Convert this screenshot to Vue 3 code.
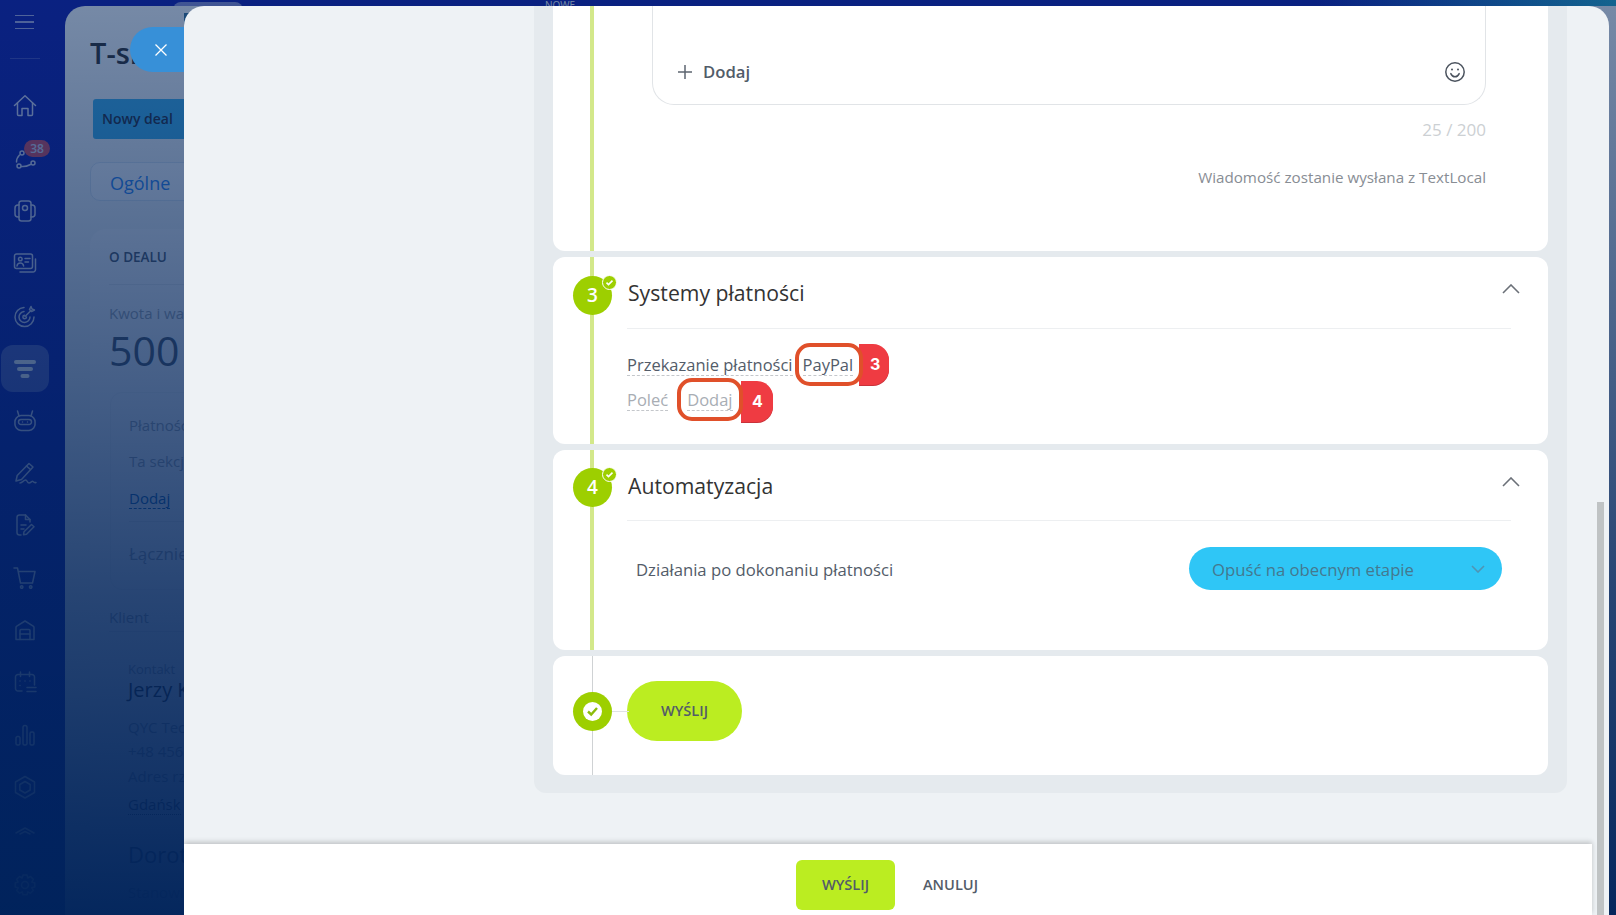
<template>
  <div class="page">
    <!-- Menu boczne -->
    <aside class="sidebar">
      <div class="burger"><span></span><span></span><span></span></div>
      <div class="side-sep"></div>
      <div v-for="item in menu" :key="item.id" class="side-item" :class="'si-' + item.id">
        <div class="side-ico" :class="{ active: item.active }">
          <svg width="24" height="24" viewBox="0 0 24 24" fill="none" stroke="#fff" stroke-width="1.5" stroke-linecap="round" stroke-linejoin="round">
            <path v-for="d in item.paths" :key="d" :d="d" />
          </svg>
          <span v-if="item.badge" class="side-badge">{{ item.badge }}</span>
        </div>
      </div>
    </aside>

    <!-- Karta dealu pod panelem -->
    <main class="deal">
      <h1 class="deal-title">T-shirt</h1>
      <div class="deal-btn">Nowy deal</div>
      <div class="deal-tab">Ogólne</div>
      <section class="deal-card">
        <div class="o-head">O DEALU</div>
        <div class="kwota">Kwota i waluta</div>
        <div class="amount">500 zł</div>
        <div class="inner">
          <div class="pl">Płatność</div>
          <div class="ta">Ta sekcja</div>
          <div class="inner-add"><span>Dodaj</span></div>
          <div class="inner-sep"></div>
          <div class="total">Łącznie</div>
        </div>
        <div class="klient">Klient</div>
        <div class="contact">
          <div class="c-label">Kontakt</div>
          <div class="c-name">Jerzy Kowalski</div>
          <div class="c-line c1">QYC Tech</div>
          <div class="c-line c2">+48 456</div>
          <div class="c-line c3">Adres rz</div>
          <div class="c-line c4"><span>Gdańsk</span></div>
          <div class="c-name2">Dorota</div>
          <div class="c-line c5">Stanowisko</div>
        </div>
      </section>
    </main>
    <div class="behind-pill"></div>
    <div class="behind-label">NOWE</div>

    <div class="shade"></div>
    <div class="corner-bit"></div>

    <button class="close-tab">
      <svg width="14" height="14" viewBox="0 0 14 14" fill="none" stroke="#fff" stroke-width="1.3"><path d="M1.5 1.5l11 11M12.5 1.5l-11 11" /></svg>
    </button>

    <!-- Panel wysuwany -->
    <div class="slider">
      <div class="slider-body">
        <div class="steps">
          <!-- krok 2 -->
          <section class="card card-msg">
            <div class="line"></div>
            <div class="msg-box">
              <div class="msg-add">
                <svg width="16" height="16" viewBox="0 0 16 16" fill="none" stroke="#5d6570" stroke-width="1.5"><path d="M8 1v14M1 8h14" /></svg>
                <span>Dodaj</span>
              </div>
              <svg class="smile" width="22" height="22" viewBox="0 0 22 22" fill="none" stroke="#4b535e" stroke-width="1.5" stroke-linecap="round">
                <circle cx="11" cy="11" r="9.2" />
                <path d="M6.8 12.6c1 2.2 2.4 3.2 4.2 3.2s3.2-1 4.2-3.2" />
                <circle cx="8" cy="8.6" r="1" fill="#4b535e" stroke="none" />
                <circle cx="14" cy="8.6" r="1" fill="#4b535e" stroke="none" />
              </svg>
            </div>
            <div class="msg-count">25 / 200</div>
            <div class="msg-note">Wiadomość zostanie wysłana z TextLocal</div>
          </section>

          <!-- krok 3 -->
          <section class="card card-pay">
            <div class="line"></div>
            <div class="num">3
              <span class="num-check">
                <svg width="9" height="9" viewBox="0 0 9 9" fill="none" stroke="#fff" stroke-width="1.6"><path d="M1.5 4.6l2 2 4-4" /></svg>
              </span>
            </div>
            <div class="head">
              <h2>Systemy płatności</h2>
              <svg class="chev" width="18" height="10" viewBox="0 0 18 10" fill="none" stroke="#6b7078" stroke-width="1.6"><path d="M1 9l8-8 8 8" /></svg>
            </div>
            <div class="pay-rows">
              <div class="pay-row">
                <span class="dash">Przekazanie płatności</span>
                <span class="dash val">PayPal
                  <i class="mark-num">3</i>
                  <i class="mark-ring"></i>
                </span>
              </div>
              <div class="pay-row muted">
                <span class="dash">Poleć</span>
                <span class="dash val val-add">Dodaj
                  <i class="mark-num">4</i>
                  <i class="mark-ring"></i>
                </span>
              </div>
            </div>
          </section>

          <!-- krok 4 -->
          <section class="card card-auto">
            <div class="line"></div>
            <div class="num">4
              <span class="num-check">
                <svg width="9" height="9" viewBox="0 0 9 9" fill="none" stroke="#fff" stroke-width="1.6"><path d="M1.5 4.6l2 2 4-4" /></svg>
              </span>
            </div>
            <div class="head">
              <h2>Automatyzacja</h2>
              <svg class="chev" width="18" height="10" viewBox="0 0 18 10" fill="none" stroke="#6b7078" stroke-width="1.6"><path d="M1 9l8-8 8 8" /></svg>
            </div>
            <div class="auto-row">
              <span>Działania po dokonaniu płatności</span>
              <div class="select">
                <span>Opuść na obecnym etapie</span>
                <svg width="14" height="8" viewBox="0 0 14 8" fill="none" stroke="#4f94b4" stroke-width="1.6"><path d="M1 1l6 6 6-6" /></svg>
              </div>
            </div>
          </section>

          <!-- wyślij -->
          <section class="card card-send">
            <div class="line line-thin"></div>
            <div class="num num-send">
              <span class="send-check">
                <svg width="13" height="11" viewBox="0 0 13 11" fill="none" stroke="#8cbc0a" stroke-width="2.4"><path d="M2 5.5l3.2 3L11 2" /></svg>
              </span>
            </div>
            <div class="send-link"></div>
            <button class="send-btn">WYŚLIJ</button>
          </section>
        </div>
      </div>

      <footer class="footer">
        <button class="foot-send">WYŚLIJ</button>
        <button class="foot-cancel">ANULUJ</button>
      </footer>
      <div class="scrollbar"></div>
    </div>
  </div>
</template>

<script setup>
const menu = [
  { id: "home", paths: ["M1.5 11.5L12 1.8l10.5 9.7", "M4.5 9v11.5a1 1 0 0 0 1 1H9v-7h6v7h3.5a1 1 0 0 0 1-1V9"] },
  {
    id: "flow",
    badge: 38,
    paths: [
      "M4 19a2 2 0 1 0 4 0a2 2 0 1 0-4 0",
      "M18 16a2 2 0 1 0 4 0a2 2 0 1 0-4 0",
      "M7 6a2 2 0 1 0 4 0a2 2 0 1 0-4 0",
      "M3.500 15c0-3 1-5 3-7",
      "M8.500 19.500c3 .5 6-.5 9-2",
    ],
  },
  {
    id: "phone",
    paths: [
      "M8.500 2h7a2.500 2.500 0 0 1 2.500 2.500v15a2.500 2.500 0 0 1-2.500 2.500h-7A2.500 2.500 0 0 1 6 19.500v-15A2.500 2.500 0 0 1 8.500 2z",
      "M6 6H5a3 3 0 0 0-3 3v6a3 3 0 0 0 3 3h1",
      "M18 6h1a3 3 0 0 1 3 3v6a3 3 0 0 1-3 3h-1",
      "M9.500 9a2.500 2.500 0 1 0 5 0a2.500 2.500 0 1 0-5 0",
    ],
  },
  {
    id: "idcard",
    paths: [
      "M3.500 3h14a2 2 0 0 1 2 2v10.500a2 2 0 0 1-2 2h-14a2 2 0 0 1-2-2V5a2 2 0 0 1 2-2z",
      "M5.500 8a1.800 1.800 0 1 0 3.600 0a1.800 1.800 0 1 0-3.600 0",
      "M4 15c.3-2 1.600-3 3.300-3s3 1 3.300 3",
      "M12 7.500h5",
      "M12 11h3.500",
      "M22.500 8v10.500a2.500 2.500 0 0 1-2.500 2.500H7",
    ],
  },
  {
    id: "target",
    paths: [
      "M21 13a9.500 9.500 0 1 1-10-9.500",
      "M17 13a5.500 5.500 0 1 1-6-5.500",
      "M13.500 13a1.800 1.800 0 1 1-2-1.800",
      "M12 12.500l6-6",
      "M16.500 5.500L18 2.500l1 2.500 2.500 1-3 1.500z",
    ],
  },
  {
    id: "funnel",
    active: true,
    paths: ["M3 6h18", "M6 13h12", "M9.500 20h5"],
  },
  {
    id: "robot",
    paths: [
      "M8 6.500h8a6.500 6.500 0 0 1 6 7.500 6.500 6.500 0 0 1-6 7.500H8a6.500 6.500 0 0 1-6-7.500 6.500 6.500 0 0 1 6-7.500z",
      "M6 7L4.500 2",
      "M18 7l1.500-5",
      "M8 10.500h8a2.500 2.500 0 0 1 0 5H8a2.500 2.500 0 0 1 0-5z",
      "M9.500 13h.01",
      "M14.500 13h.01",
    ],
  },
  {
    id: "pen",
    paths: [
      "M16 2.500l4 3.500L8.500 18.500 3 20l1.200-5.500z",
      "M13.500 5l4 3.500",
      "M7 22c2.500 0 3.500-3 5.500-3s1.500 3 3.500 3 3-2.500 4-1.500 1.500 1.500 3 1",
    ],
  },
  {
    id: "doc",
    paths: [
      "M17 9V6.500L12.500 2H6.500A2.500 2.500 0 0 0 4 4.500v15A2.500 2.500 0 0 0 6.500 22H8",
      "M12.500 2v4.500H17",
      "M8 12h5",
      "M8 16h3",
      "M18.500 11.500l2.500 2.200-7.500 7.500-3 .5.5-3z",
    ],
  },
  {
    id: "cart",
    paths: [
      "M1 2h3.500l3 15h12l2.500-11.500H5.500",
      "M7.500 21a1.200 1.200 0 1 0 2.400 0a1.200 1.200 0 1 0-2.400 0",
      "M16.500 21a1.200 1.200 0 1 0 2.400 0a1.200 1.200 0 1 0-2.400 0",
    ],
  },
  {
    id: "garage",
    paths: [
      "M3 21.500V9.500c0-.6.300-1.100.8-1.400L12 3l8.200 5.100c.5.3.8.8.8 1.400v12z",
      "M7 21.500V12.500a1 1 0 0 1 1-1h8a1 1 0 0 1 1 1v9",
      "M7 16h10",
    ],
  },
  {
    id: "calendar",
    paths: [
      "M9 21H5a2.500 2.500 0 0 1-2.500-2.500V7A2.500 2.500 0 0 1 5 4.500h14A2.500 2.500 0 0 1 21.500 7v8",
      "M7.500 2v4.500",
      "M16.500 2v4.500",
      "M7 11h.01",
      "M12 11h.01",
      "M17 11h.01",
      "M7 15.500h.01",
      "M14 17.500h9",
      "M14 21.500h9",
    ],
  },
  {
    id: "bars",
    paths: [
      "M4.500 13.500h1a1.500 1.500 0 0 1 1.500 1.500v5.500a1.500 1.500 0 0 1-1.500 1.500h-1A1.500 1.500 0 0 1 3 20.500V15a1.500 1.500 0 0 1 1.500-1.500z",
      "M12 2.500a2 2 0 0 1 2 2v16a1.500 1.500 0 0 1-1.500 1.500h-1a1.500 1.500 0 0 1-1.500-1.500v-16a2 2 0 0 1 2-2z",
      "M18.500 9h1a1.500 1.500 0 0 1 1.500 1.500v10a1.500 1.500 0 0 1-1.500 1.500h-1a1.500 1.500 0 0 1-1.500-1.500v-10A1.500 1.500 0 0 1 18.500 9z",
    ],
  },
  {
    id: "hex",
    paths: ["M12 1.500l9.500 5.500v10.500L12 23l-9.500-5.500V7z", "M12 6.500l5.200 3v5.500L12 18l-5.200-3V9.500z"],
  },
  { id: "arc", paths: ["M3 9l9-5 9 5", "M7 10l5-2.500 5 2.500"] },
  {
    id: "gear",
    paths: [
      "M8.500 12a3.500 3.500 0 1 0 7 0a3.500 3.500 0 1 0-7 0",
      "M10 2h4l.8 3 2.700-1.500 2.800 2.800L18.800 9l3 1v4l-3 .8 1.500 2.700-2.800 2.800-2.700-1.500-.8 3h-4l-.8-3-2.700 1.500-2.800-2.800L5.200 14.800l-3-.8v-4l3-1-1.500-2.700 2.800-2.800L9.200 5z",
    ],
  },
];
</script>

<style scoped>
.page {
  position: relative;
  display: flex;
  width: 1616px;
  height: 915px;
  overflow: hidden;
  background: radial-gradient(circle 300px at 100% 0, #25a5c4, rgba(37, 165, 196, 0)), #141fa8;
  font-family: "Open Sans", "Liberation Sans", sans-serif;
  color: #535c69;
}

/* Menu boczne */
.sidebar {
  width: 65px;
  flex: none;
  padding-left: 1px;
  box-sizing: border-box;
}

.burger {
  display: flex;
  flex-direction: column;
  justify-content: center;
  gap: 5px;
  height: 44px;
  padding-left: 14px;
}

.burger span {
  display: block;
  width: 19px;
  height: 1.5px;
  background: #fff;
  opacity: 0.6;
}

.side-sep {
  width: 30px;
  height: 1px;
  margin: 14px 0 21px 9px;
  background: rgba(255, 255, 255, 0.2);
}

.side-item {
  display: flex;
  align-items: center;
  height: 52.4px;
}

.side-item.si-arc {
  height: 45px;
}

.side-ico {
  position: relative;
  display: flex;
  align-items: center;
  justify-content: center;
  width: 48px;
  height: 47px;
  border-radius: 12px;
  opacity: 0.8;
}

.side-ico.active {
  background: rgba(255, 255, 255, 0.3);
  opacity: 1;
}

.si-funnel path {
  stroke-width: 4;
}

.side-badge {
  position: absolute;
  left: 23px;
  top: 5px;
  width: 26px;
  height: 17px;
  border-radius: 9px;
  background: #ff5752;
  color: #fff;
  font-size: 12px;
  font-weight: 600;
  line-height: 17px;
  text-align: center;
}

/* Karta dealu */
.deal {
  flex: 1;
  margin-top: 6px;
  padding: 27px 0 0 25px;
  border-radius: 20px 0 0 0;
  background: #eef2f4;
  overflow: hidden;
}

.deal-title {
  margin: 0;
  font-size: 29px;
  font-weight: 600;
  line-height: 40px;
  color: #333;
}

.deal-btn {
  width: 160px;
  height: 40px;
  margin: 26px 0 0 3px;
  padding-left: 9px;
  box-sizing: border-box;
  border-radius: 3px;
  background: #3faee6;
  color: #2a3040;
  font-size: 14px;
  font-weight: 600;
  line-height: 40px;
}

.deal-tab {
  width: 200px;
  height: 39px;
  margin-top: 23px;
  padding-left: 19px;
  box-sizing: border-box;
  border: 1px solid #d5e2ee;
  border-radius: 10px;
  background: #f5f8fb;
  color: #2f86ee;
  font-size: 18px;
  line-height: 40px;
}

.deal-card {
  width: 400px;
  height: 700px;
  margin-top: 28px;
  padding-left: 19px;
  box-sizing: border-box;
  border-radius: 16px;
  background: #f5f7f9;
}

.o-head {
  height: 56px;
  border-bottom: 1px solid #e3e7ea;
  box-sizing: border-box;
  font-size: 13.5px;
  font-weight: 600;
  line-height: 56px;
  color: #525c69;
}

.kwota {
  margin-top: 16px;
  font-size: 15px;
  line-height: 24px;
  color: #a0a7b0;
}

.amount {
  font-size: 41px;
  line-height: 50px;
  color: #535c69;
}

.inner {
  height: 198px;
  margin: 17px 0 0 1px;
  padding: 20px 0 0 18px;
  box-sizing: border-box;
  border: 1px solid #eceff1;
  border-radius: 12px;
}

.pl,
.ta,
.total {
  font-size: 15px;
  line-height: 24px;
  color: #a0a7b0;
}

.ta {
  margin-top: 12px;
}

.inner-add {
  margin-top: 13px;
  font-size: 15px;
  line-height: 24px;
  color: #2067b0;
}

.inner-add span {
  border-bottom: 1px dashed #2067b0;
}

.inner-sep {
  margin-top: 11px;
  border-bottom: 1px solid #e3e7ea;
}

.total {
  margin-top: 20px;
  font-size: 17px;
}

.klient {
  margin-top: 15px;
  padding-bottom: 2px;
  border-bottom: 1px solid #e3e7ea;
  font-size: 15px;
  line-height: 24px;
  color: #a0a7b0;
}

.contact {
  padding-left: 19px;
}

.c-label {
  margin-top: 27px;
  font-size: 13px;
  line-height: 20px;
  color: #a0a7b0;
}

.c-name {
  margin-top: -3px;
  font-size: 20px;
  line-height: 28px;
  color: #333;
}

.c-line {
  font-size: 15px;
  line-height: 22px;
  color: #9aa3ad;
}

.c1 {
  margin-top: 12px;
}

.c2 {
  margin-top: 2px;
}

.c3 {
  margin-top: 3px;
}

.c4 {
  margin-top: 6px;
  color: #535c69;
}

.c4 span {
  border-bottom: 1px dotted #535c69;
}

.c-name2 {
  margin-top: 24px;
  font-size: 22px;
  line-height: 30px;
  color: #535c69;
}

.c5 {
  margin-top: 12px;
}

.behind-pill {
  position: absolute;
  left: 173px;
  top: 2px;
  width: 70px;
  height: 20px;
  border-radius: 8px;
  background: #eef2f4;
  opacity: 0.5;
}

.behind-label {
  position: absolute;
  left: 545px;
  top: 0;
  font-size: 10px;
  line-height: 10px;
  color: #eef2f4;
}

/* Przyciemnienie pod panelem */
.shade {
  position: absolute;
  inset: 0;
  background: linear-gradient(rgba(0, 35, 90, 0.5), rgba(0, 35, 90, 0.84) 65%, rgba(0, 35, 90, 0.98));
}

.corner-bit {
  position: absolute;
  left: 184px;
  top: 13px;
  width: 12px;
  height: 14px;
  background: #1c4a78;
}

.close-tab {
  position: absolute;
  left: 130px;
  top: 27px;
  width: 70px;
  height: 45px;
  padding: 3px 8px 0 0;
  border: none;
  border-radius: 23px 0 0 23px;
  background: #3790d8;
}

/* Panel wysuwany */
.slider {
  position: absolute;
  left: 184px;
  top: 6px;
  right: 7px;
  bottom: 0;
  display: flex;
  flex-direction: column;
  border-radius: 20px 20px 0 0;
  background: #eef2f5;
  overflow: hidden;
}

.slider-body {
  flex: 1;
  min-height: 0;
  padding: 0 42px 0 350px;
}

.steps {
  display: flex;
  flex-direction: column;
  gap: 6px;
  padding: 0 19px 18px;
  border-radius: 0 0 12px 12px;
  background: #e5eaee;
}

.card {
  position: relative;
  padding: 0 37px 0 74px;
  border-radius: 12px;
  background: #fff;
}

.line {
  position: absolute;
  left: 37px;
  top: 0;
  bottom: 0;
  width: 4px;
  background: #d3e88a;
}

.line-thin {
  left: 39px;
  width: 1px;
  background: #cfd2d4;
}

.num {
  position: absolute;
  left: 20px;
  top: 19px;
  width: 39px;
  height: 39px;
  border-radius: 50%;
  background: #9dcf00;
  color: #fff;
  font-size: 19px;
  font-weight: 600;
  line-height: 39px;
  text-align: center;
}

.num-check {
  position: absolute;
  left: 29px;
  top: -1px;
  display: flex;
  align-items: center;
  justify-content: center;
  width: 15px;
  height: 15px;
  box-sizing: border-box;
  border: 1.5px solid #fff;
  border-radius: 50%;
  background: #9dcf00;
}

.head {
  display: flex;
  align-items: flex-start;
  justify-content: space-between;
  height: 72px;
  box-sizing: border-box;
  border-bottom: 1px solid #edeff1;
}

.head h2 {
  margin: 18px 0 0 1px;
  font-size: 21.2px;
  font-weight: 400;
  line-height: 36px;
  color: #333;
}

.chev {
  margin: 27px -9px 0 0;
}

/* Wiadomość */
.card-msg {
  height: 245px;
  padding: 0 62px 0 99px;
  border-radius: 0 0 12px 12px;
}

.msg-box {
  display: flex;
  align-items: center;
  justify-content: space-between;
  height: 99px;
  padding: 33px 19px 0 24px;
  box-sizing: border-box;
  border: 1px solid #e1e4e7;
  border-top: none;
  border-radius: 0 0 22px 22px;
}

.msg-add {
  display: flex;
  align-items: center;
  gap: 10px;
  font-size: 16.7px;
  font-weight: 600;
  color: #525c69;
}

.msg-count {
  margin-top: 12px;
  font-size: 17px;
  line-height: 26px;
  text-align: right;
  color: #ccd0d3;
}

.msg-note {
  margin-top: 23px;
  font-size: 15.2px;
  line-height: 22px;
  text-align: right;
  color: #888d94;
}

/* Płatności */
.card-pay {
  height: 187px;
}

.pay-rows {
  padding-top: 18px;
}

.pay-row {
  display: flex;
  align-items: center;
  height: 35px;
  font-size: 16.5px;
  color: #535c69;
}

.pay-row.muted {
  color: #a8adb4;
}

.dash {
  border-bottom: 1px dashed #c4c7cb;
  line-height: 21px;
}

.val {
  position: relative;
  margin-left: 10px;
}

.val-add {
  margin-left: 19px;
}

.mark-ring {
  position: absolute;
  left: -8px;
  top: -11px;
  right: -10px;
  bottom: -11px;
  border: 4px solid #e0502a;
  border-radius: 15px;
}

.val-add .mark-ring {
  left: -10px;
}

.mark-num {
  position: absolute;
  right: -36px;
  top: -10px;
  width: 30px;
  height: 41px;
  padding-left: 2px;
  box-sizing: border-box;
  border-radius: 0 16px 16px 0;
  background: #ef3b42;
  box-shadow: 0 1px 0 #c9323a;
  color: #fff;
  font-family: Inter, "Open Sans", sans-serif;
  font-size: 16px;
  font-style: normal;
  font-weight: 700;
  line-height: 41px;
  text-align: center;
}

.val-add .mark-num {
  right: -40px;
  top: -8px;
  width: 32px;
}

/* Automatyzacja */
.card-auto {
  height: 200px;
}

.card-auto .head {
  height: 71px;
}

.card-auto .num {
  top: 18px;
}

.auto-row {
  display: flex;
  align-items: center;
  justify-content: space-between;
  margin-top: 26px;
  padding: 0 9px;
  font-size: 16.7px;
  color: #535c69;
}

.auto-row span {
  padding-top: 2px;
}

.select {
  display: flex;
  align-items: center;
  justify-content: space-between;
  width: 313px;
  height: 43px;
  padding: 0 17px 0 23px;
  box-sizing: border-box;
  border-radius: 22px;
  background: #2fc6f6;
  color: #44788f;
}

/* Wyślij */
.card-send {
  height: 119px;
  padding-top: 25px;
  box-sizing: border-box;
}

.num-send {
  top: 36px;
  display: flex;
  align-items: center;
  justify-content: center;
}

.send-check {
  display: flex;
  align-items: center;
  justify-content: center;
  width: 19px;
  height: 19px;
  border-radius: 50%;
  background: #fff;
}

.send-link {
  position: absolute;
  left: 59px;
  top: 55px;
  width: 17px;
  height: 1px;
  background: #dfe2e4;
}

.send-btn {
  display: block;
  width: 115px;
  height: 60px;
  padding: 0 0 2px;
  border: none;
  border-radius: 30px;
  background: #bbed21;
  color: #535c69;
  font-family: inherit;
  font-size: 14.6px;
  font-weight: 600;
}

/* Stopka */
.footer {
  position: relative;
  flex: none;
  display: flex;
  justify-content: center;
  gap: 8px;
  height: 71px;
  margin-right: 17px;
  padding: 16px 0 0 18px;
  box-sizing: border-box;
  background: #fff;
  box-shadow: 0 -2px 5px rgba(0, 0, 0, 0.2);
}

.foot-send {
  width: 99px;
  height: 50px;
  padding: 0 0 2px;
  border: none;
  border-radius: 6px;
  background: #bbed21;
  color: #535c69;
  font-family: inherit;
  font-size: 14.6px;
  font-weight: 600;
}

.foot-cancel {
  width: 95px;
  height: 50px;
  padding: 0 0 2px;
  border: none;
  background: none;
  color: #535c69;
  font-family: inherit;
  font-size: 14.6px;
  font-weight: 600;
}

.scrollbar {
  position: absolute;
  right: 5px;
  top: 496px;
  bottom: 0;
  width: 7px;
  background: #bfc3c4;
}
</style>
